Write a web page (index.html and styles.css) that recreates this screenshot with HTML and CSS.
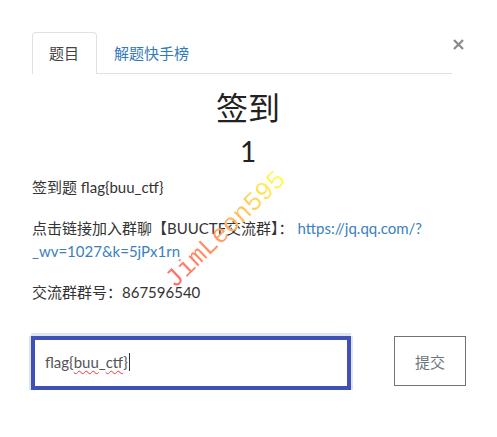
FILE: index.html
```html
<!DOCTYPE html>
<html lang="zh">
<head>
<meta charset="utf-8">
<title>签到</title>
<link rel="stylesheet" href="styles.css">
</head>
<body>
<div class="modal">
  <div class="tabs-row">
    <ul class="tabs">
      <li class="tab active">题目</li>
      <li class="tab">解题快手榜</li>
    </ul>
    <button class="close" aria-label="close">
      <svg width="11" height="11" viewBox="0 0 11 11"><path d="M1 1L10 10M10 1L1 10" stroke="#8a8a8a" stroke-width="2.2" fill="none"/></svg>
    </button>
  </div>
  <div class="body">
    <h1 class="title">签到</h1>
    <div class="score">1</div>
    <p class="desc">签到题 flag{buu_ctf}</p>
    <p class="desc">点击链接加入群聊【BUUCTF交流群】： <a class="link" href="#">https://jq.qq.com/?<wbr>_wv=1027&amp;k=5jPx1rn</a></p>
    <p class="desc">交流群群号：867596540</p>
    <div class="submit-row">
      <div class="input"><span class="typed">flag{<span class="spell">buu</span>_<span class="spell">ctf</span>}</span><span class="caret"></span></div>
      <button class="submit">提交</button>
    </div>
    <span class="watermark">JimLeon595</span>
  </div>
</div>
</body>
</html>
```
FILE: styles.css
```css
html, body {
  margin: 0;
  background: #fff;
}
body {
  font-family: "Lato", "Noto Sans CJK SC", sans-serif;
  color: #333;
  font-size: 15px;
}
.modal {
  padding: 32px 33px 0 32px;
}
.tabs-row {
  display: flex;
  align-items: flex-start;
}
.tabs {
  list-style: none;
  margin: 0;
  padding: 0;
  display: flex;
  width: 420px;
  border-bottom: 1px solid #dee2e6;
}
.tab {
  height: 41px;
  line-height: 41px;
  padding: 0 17px 0 16px;
  font-size: 15px;
  color: #337ab7;
  border: 1px solid transparent;
  border-bottom: none;
  border-radius: 4px 4px 0 0;
  margin-bottom: -1px;
  box-sizing: border-box;
}
.tab.active {
  color: #444;
  background: #fff;
  border-color: #dee2e6;
  height: 42px;
  width: 65px;
}
.close {
  margin: 7px 0 0 1px;
  padding: 0;
  border: none;
  background: none;
  width: 11px;
  height: 11px;
  line-height: 0;
}
.body {
  position: relative;
}
.title {
  margin: 16px 0 0;
  text-align: center;
  font-size: 32px;
  font-weight: 400;
  line-height: 36px;
  color: #222;
}
.score {
  margin-top: 9px;
  text-align: center;
  font-size: 28px;
  line-height: 32px;
  color: #222;
}
.desc {
  margin: 9px 0 18px;
  line-height: 23px;
  font-size: 15px;
}
.link {
  color: #3a7fc1;
  text-decoration: none;
}
.submit-row {
  display: flex;
  align-items: flex-start;
  justify-content: space-between;
  margin-top: 32px;
}
.input {
  width: 320px;
  height: 54px;
  box-sizing: border-box;
  border: 4px solid #3f51b5;
  box-shadow: 0 -3px 0 0 #dfe4f2, 0 1px 0 1px #dfe4f2, -2px 0 0 0 #dfe4f2, 2px 0 0 0 #dfe4f2;
  margin-left: -1px;
  display: flex;
  align-items: center;
  padding: 0 0 3px 10px;
  font-size: 15px;
  color: #555;
}
.spell {
  text-decoration: underline wavy #e33;
  text-decoration-thickness: 1px;
  text-underline-offset: 2px;
}
.caret {
  display: inline-block;
  width: 1px;
  height: 18px;
  background: #333;
  margin-left: 1px;
}
.submit {
  width: 72px;
  height: 50px;
  margin-right: -2px;
  border: 1px solid #6c757d;
  border-radius: 0;
  background: #fff;
  color: #6c757d;
  font-family: "Lato", "Noto Sans CJK SC", sans-serif;
  font-size: 15px;
  padding: 0;
}
.watermark {
  position: absolute;
  left: 130px;
  top: 186px;
  font-family: "Liberation Mono", monospace;
  font-size: 26px;
  font-weight: 400;
  line-height: 22px;
  transform: rotate(-44deg);
  transform-origin: 0 0;
  background: linear-gradient(90deg, #ff6a6a 0%, #ffa060 45%, #ffff55 100%);
  -webkit-background-clip: text;
  background-clip: text;
  color: transparent;
  white-space: nowrap;
  pointer-events: none;
}
```
